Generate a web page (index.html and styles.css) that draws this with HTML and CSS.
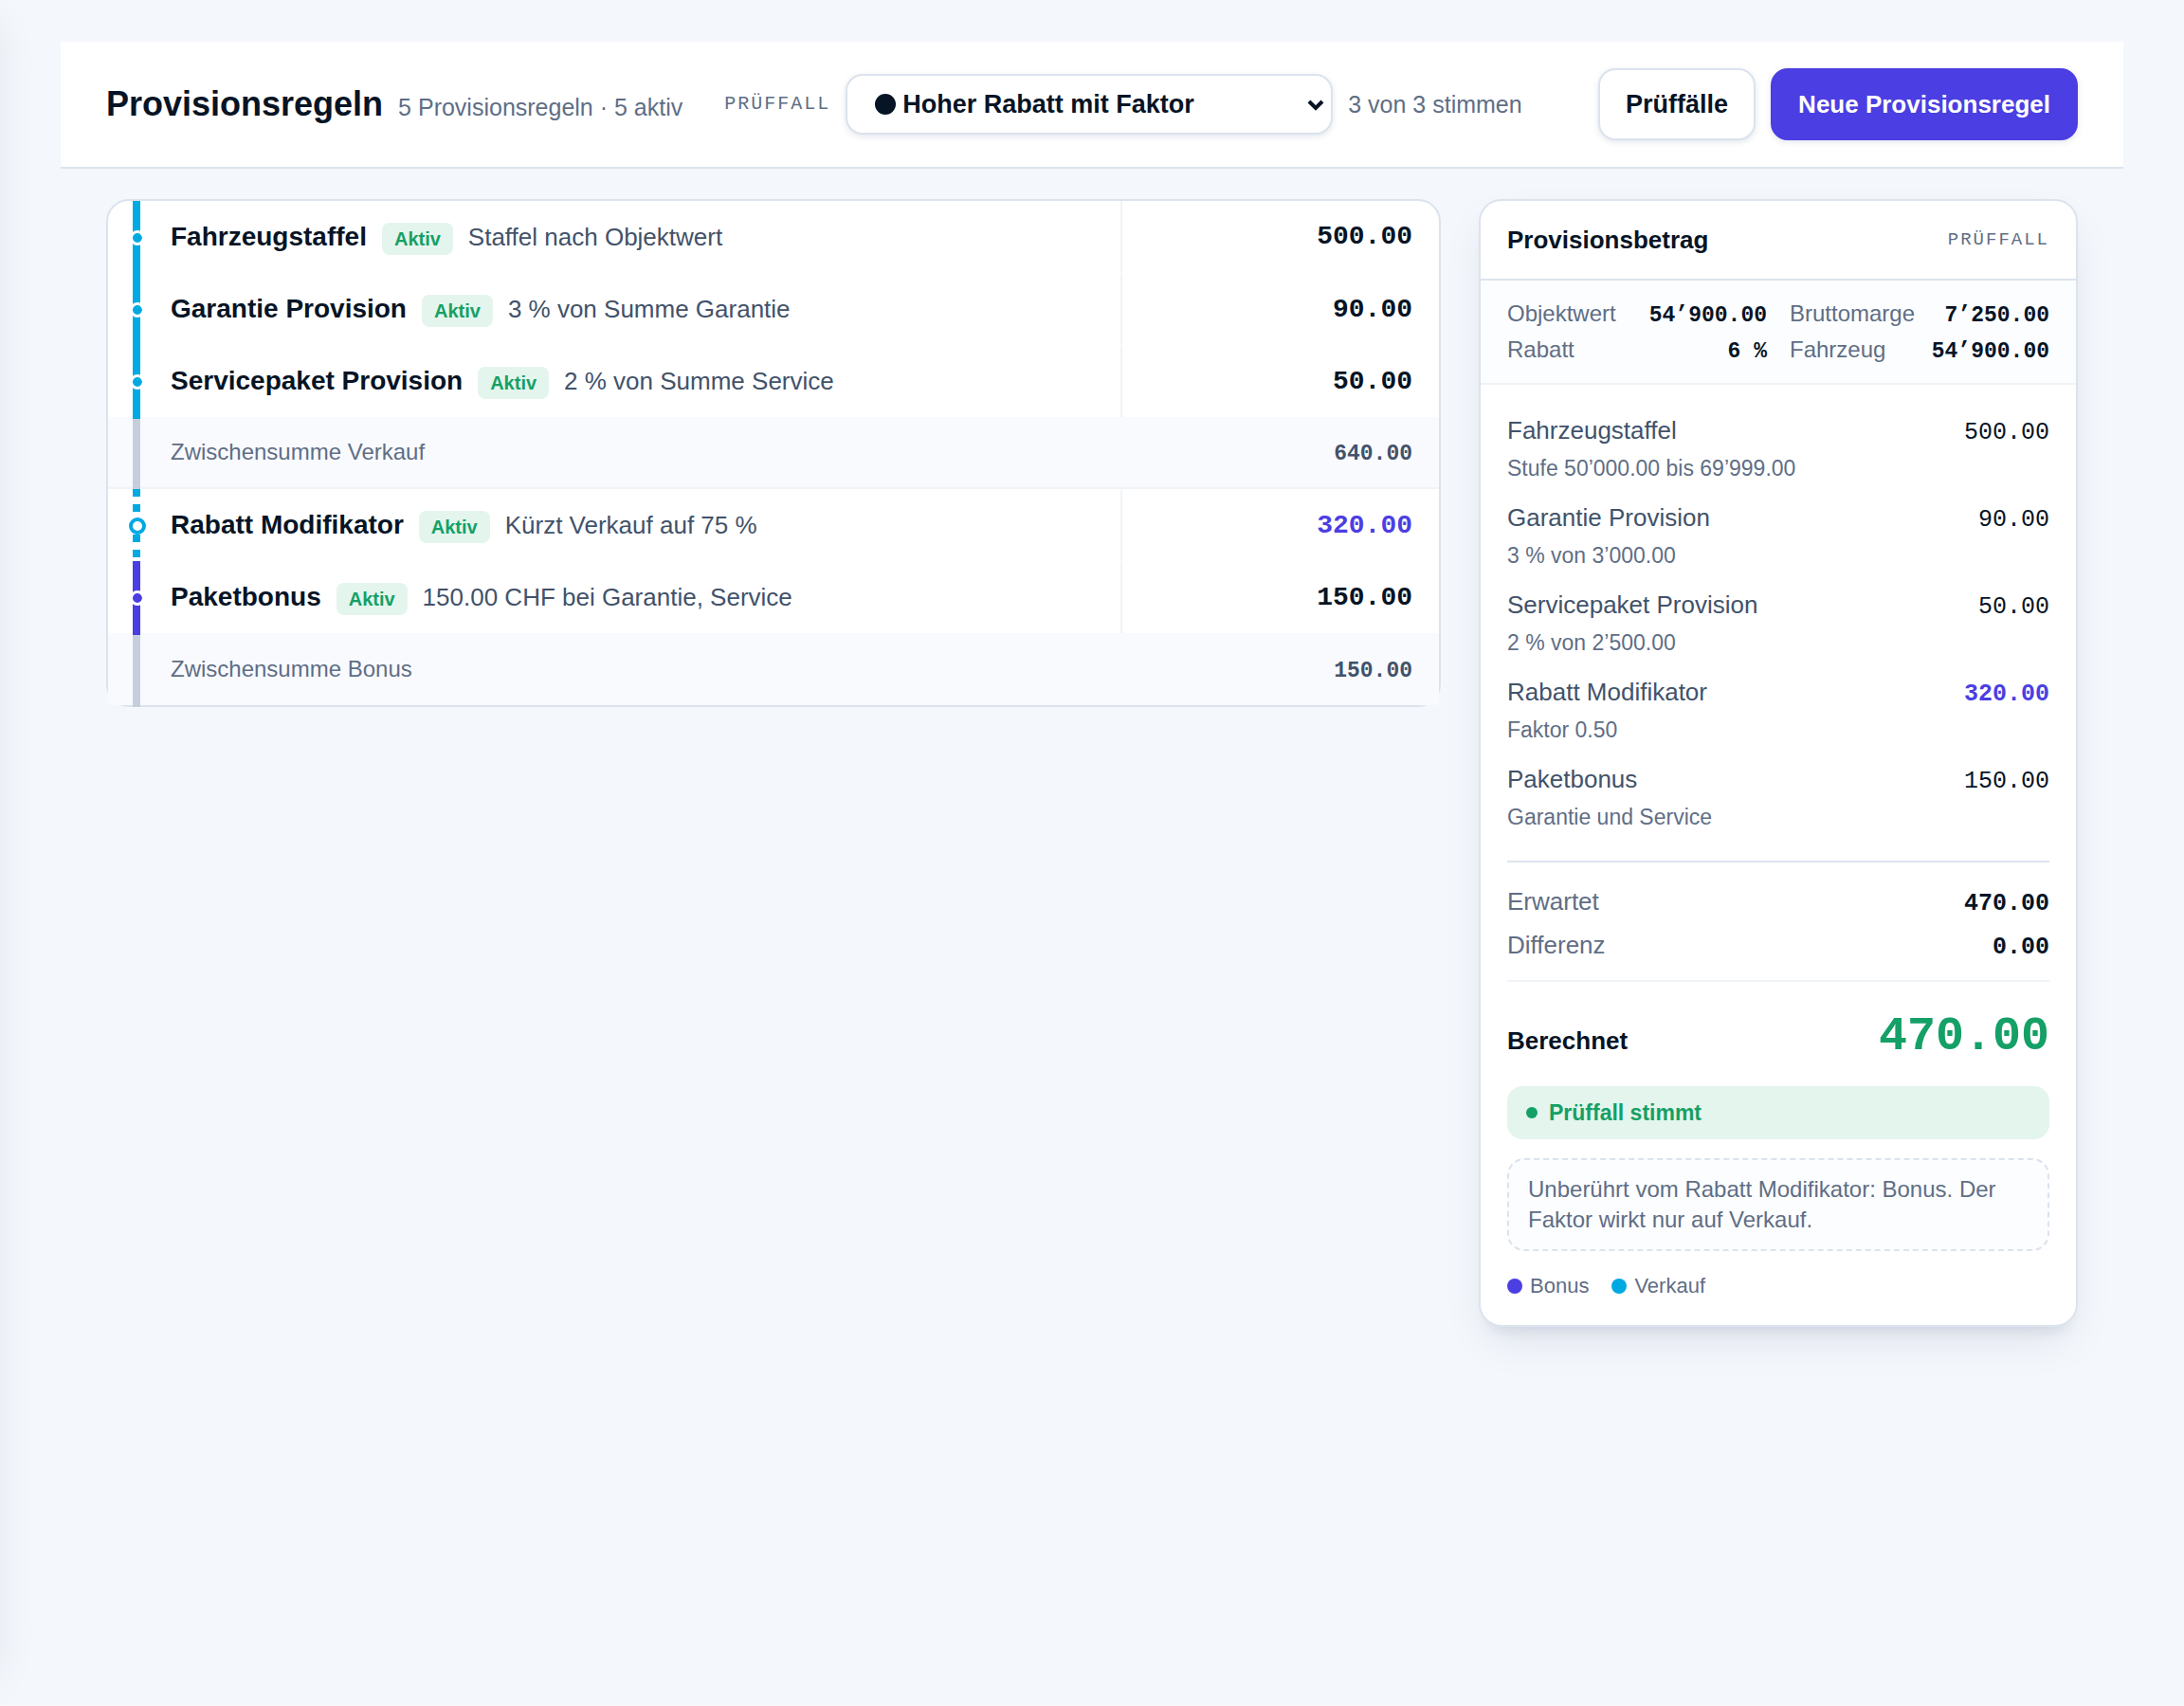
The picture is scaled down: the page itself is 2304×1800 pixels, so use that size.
FILE: index.html
```html
<!DOCTYPE html>
<html lang="de-CH">
<head>
<meta charset="utf-8">
<meta name="viewport" content="width=device-width, initial-scale=1">
<title>Provisionsregeln</title>
<link rel="stylesheet" href="styles.css">
</head>
<body>
<div class="drawer-edge"></div>
<header class="topbar">
  <div class="heading">
    <h1>Provisionsregeln</h1>
    <p class="summary">5 Provisionsregeln · 5 aktiv</p>
  </div>
  <div class="case-picker">
    <label class="overline" for="case">PRÜFFALL</label>
    <div class="select">
      <select id="case">
        <option>Hoher Rabatt mit Faktor</option>
      </select>
      <svg class="chevron" viewBox="0 0 18 12" aria-hidden="true"><path d="M2 2l7 7 7-7" fill="none" stroke="currentColor" stroke-width="4"/></svg>
    </div>
    <span class="summary">3 von 3 stimmen</span>
  </div>
  <div class="actions">
    <button class="btn" type="button">Prüffälle</button>
    <button class="btn btn-primary" type="button">Neue Provisionsregel</button>
  </div>
</header>
<main class="content">
  <section class="rules">
    <table>
      <tbody>
        <tr class="rule sales">
          <td class="track"><span class="line"></span><span class="stop"></span></td>
          <td><div class="info"><strong>Fahrzeugstaffel</strong><span class="tag">Aktiv</span><span>Staffel nach Objektwert</span></div></td>
          <td class="amount">500.00</td>
        </tr>
        <tr class="rule sales">
          <td class="track"><span class="line"></span><span class="stop"></span></td>
          <td><div class="info"><strong>Garantie Provision</strong><span class="tag">Aktiv</span><span>3 % von Summe Garantie</span></div></td>
          <td class="amount">90.00</td>
        </tr>
        <tr class="rule sales">
          <td class="track"><span class="line"></span><span class="stop"></span></td>
          <td><div class="info"><strong>Servicepaket Provision</strong><span class="tag">Aktiv</span><span>2 % von Summe Service</span></div></td>
          <td class="amount">50.00</td>
        </tr>
        <tr class="subtotal divided">
          <td class="track"><span class="line"></span></td>
          <td>Zwischensumme Verkauf</td>
          <td class="amount">640.00</td>
        </tr>
        <tr class="rule sales modifier">
          <td class="track"><span class="line"></span><span class="stop"></span></td>
          <td><div class="info"><strong>Rabatt Modifikator</strong><span class="tag">Aktiv</span><span>Kürzt Verkauf auf 75 %</span></div></td>
          <td class="amount">320.00</td>
        </tr>
        <tr class="rule bonus">
          <td class="track"><span class="line"></span><span class="stop"></span></td>
          <td><div class="info"><strong>Paketbonus</strong><span class="tag">Aktiv</span><span>150.00 CHF bei Garantie, Service</span></div></td>
          <td class="amount">150.00</td>
        </tr>
        <tr class="subtotal">
          <td class="track"><span class="line"></span></td>
          <td>Zwischensumme Bonus</td>
          <td class="amount">150.00</td>
        </tr>
      </tbody>
    </table>
  </section>
  <aside class="result">
    <div class="result-head">
      <h2>Provisionsbetrag</h2>
      <span class="overline">PRÜFFALL</span>
    </div>
    <dl class="inputs">
      <div><dt>Objektwert</dt><dd>54’900.00</dd></div>
      <div><dt>Bruttomarge</dt><dd>7’250.00</dd></div>
      <div><dt>Rabatt</dt><dd>6 %</dd></div>
      <div><dt>Fahrzeug</dt><dd>54’900.00</dd></div>
    </dl>
    <div class="result-body">
      <ul class="steps">
        <li><span>Fahrzeugstaffel</span><span class="value">500.00</span><small>Stufe 50’000.00 bis 69’999.00</small></li>
        <li><span>Garantie Provision</span><span class="value">90.00</span><small>3 % von 3’000.00</small></li>
        <li><span>Servicepaket Provision</span><span class="value">50.00</span><small>2 % von 2’500.00</small></li>
        <li><span>Rabatt Modifikator</span><span class="value changed">320.00</span><small>Faktor 0.50</small></li>
        <li><span>Paketbonus</span><span class="value">150.00</span><small>Garantie und Service</small></li>
      </ul>
      <dl class="check">
        <div><dt>Erwartet</dt><dd>470.00</dd></div>
        <div><dt>Differenz</dt><dd>0.00</dd></div>
      </dl>
      <div class="total"><span>Berechnet</span><output>470.00</output></div>
      <p class="status">Prüffall stimmt</p>
      <p class="note">Unberührt vom Rabatt Modifikator: Bonus. Der Faktor wirkt nur auf Verkauf.</p>
      <ul class="legend">
        <li class="bonus">Bonus</li>
        <li class="sales">Verkauf</li>
      </ul>
    </div>
  </aside>
</main>
</body>
</html>
```
FILE: styles.css
```css
:root {
  --bg: #f4f7fc;
  --ink: #071425;
  --text: #42526a;
  --muted: #5f6e85;
  --border: #dce3ed;
  --hairline: #eff3f8;
  --primary: #4b3ee2;
  --sky: #00a9e2;
  --green: #14a066;
  --green-soft: #e4f5ed;
  --sans: "Liberation Sans", Arial, sans-serif;
  --mono: "Liberation Mono", "Courier New", monospace;
  --shadow-sm: 0 2px 6px rgba(20, 50, 100, .12);
  --shadow-lg: 0 14px 16px -12px rgba(30, 60, 110, .14), 0 20px 48px -10px rgba(20, 40, 70, .1);
}

* { box-sizing: border-box; }

body {
  margin: 0;
  padding: 44px 64px;
  background: var(--bg);
  color: var(--text);
  font: 26px/40px var(--sans);
}

h1, h2, p, dl, dd, ul { margin: 0; padding: 0; }
ul { list-style: none; }

/* Closed navigation drawer: only its shadow reaches into the page */
.drawer-edge {
  position: fixed;
  top: 0;
  bottom: 40px;
  left: -80px;
  width: 80px;
  border-radius: 24px;
  box-shadow: 0 16px 48px -6px rgba(20, 40, 70, .09);
}

.overline {
  color: var(--muted);
  font: 20px/40px var(--mono);
  letter-spacing: 2px;
}

/* Top bar */
.topbar {
  display: flex;
  align-items: center;
  gap: 44px;
  padding: 28px 48px;
  background: #fff;
  border-bottom: 2px solid var(--border);
}
.heading {
  display: flex;
  align-items: baseline;
  gap: 16px;
}
h1 {
  color: var(--ink);
  font-size: 36px;
  line-height: 48px;
}
.summary {
  color: var(--muted);
  font-size: 25px;
  white-space: nowrap;
}
.case-picker {
  display: flex;
  align-items: center;
  gap: 16px;
}
.select { position: relative; }
.select select {
  appearance: none;
  width: 514px;
  height: 64px;
  padding: 0 60px 0 58px;
  border: 2px solid var(--border);
  border-radius: 18px;
  background: #fff;
  box-shadow: var(--shadow-sm);
  color: var(--ink);
  font: bold 27px var(--sans);
}
.select::before {
  position: absolute;
  top: 21px;
  left: 31px;
  width: 22px;
  height: 22px;
  border-radius: 50%;
  background: var(--ink);
  content: "";
  pointer-events: none;
}
.chevron {
  position: absolute;
  top: 27px;
  right: 9px;
  width: 18px;
  height: 12px;
  color: var(--ink);
  pointer-events: none;
}
.actions {
  display: flex;
  gap: 16px;
  margin-left: auto;
}
.btn {
  height: 76px;
  padding: 0 27px;
  border: 2px solid var(--border);
  border-radius: 18px;
  background: #fff;
  box-shadow: var(--shadow-sm);
  color: var(--ink);
  font: bold 27px var(--sans);
  white-space: nowrap;
}
.btn-primary {
  border-color: var(--primary);
  background: var(--primary);
  color: #fff;
  font-size: 26px;
}

.content {
  display: grid;
  grid-template-columns: minmax(0, 1fr) 632px;
  align-items: start;
  gap: 40px;
  padding: 32px 48px;
}

/* Rules */
.rules {
  border: 2px solid var(--border);
  border-radius: 24px;
  background: #fff;
}
.rules table {
  width: 100%;
  border-spacing: 0;
}
.rules td {
  height: 76px;
  padding: 0;
}
.rules .track {
  position: relative;
  width: 66px;
}
.line {
  position: absolute;
  z-index: 1;
  top: 0;
  bottom: -2px;
  left: 26px;
  width: 8px;
  background: #c5cfdc;
}
.stop {
  position: absolute;
  z-index: 2;
  top: 31px;
  left: 23px;
  width: 16px;
  height: 16px;
  border: 3px solid #fff;
  border-radius: 50%;
  background-clip: padding-box;
}
.subtotal .line { top: 2px; }
.sales .line, .sales .stop { background-color: var(--sky); }
.bonus .line, .bonus .stop { background-color: var(--primary); }
.modifier .line {
  bottom: 0;
  background: repeating-linear-gradient(var(--sky) 0 8px, #fff 8px 16px);
}
.modifier .stop {
  top: 30px;
  left: 22px;
  width: 18px;
  height: 18px;
  border: 4px solid var(--sky);
  background: #fff;
}
.info {
  display: flex;
  align-items: baseline;
  gap: 16px;
}
.info strong {
  color: var(--ink);
  font-size: 28px;
}
.tag {
  padding: 0 13px;
  border-radius: 8px;
  background: var(--green-soft);
  color: var(--green);
  font-size: 20px;
  font-weight: bold;
  line-height: 34px;
}
.rules .amount {
  width: 336px;
  padding-right: 28px;
  color: var(--ink);
  font: bold 28px/40px var(--mono);
  text-align: right;
}
.rule .amount {
  border-top: 2px solid #fff;
  border-left: 2px solid var(--hairline);
}
.rule:first-child .amount {
  border-top: 0;
  border-top-right-radius: 22px;
}
.rules .modifier .amount { color: var(--primary); }
.subtotal td {
  background: #f9fafe;
  color: var(--muted);
  font-size: 24px;
}
.rules .subtotal .amount {
  padding-top: 4px;
  color: var(--text);
  font-size: 23px;
}
.divided td { border-bottom: 2px solid var(--hairline); }

/* Result */
.result {
  border: 2px solid var(--border);
  border-radius: 24px;
  background: #fff;
  box-shadow: var(--shadow-lg);
}
.result-head {
  display: flex;
  align-items: center;
  justify-content: space-between;
  height: 84px;
  padding: 0 28px;
  border-bottom: 2px solid var(--border);
}
.result-head .overline { font-size: 19px; }
h2 {
  color: var(--ink);
  font-size: 26px;
}
.inputs {
  display: grid;
  grid-template-columns: 1fr 1fr;
  column-gap: 24px;
  padding: 16px 28px;
  border-bottom: 2px solid var(--hairline);
  background: #fcfdff;
  font-size: 24px;
  line-height: 38px;
}
.inputs div, .check div {
  display: flex;
  align-items: baseline;
  justify-content: space-between;
  height: 38px;
}
.check div { height: 46px; }
dt { color: var(--muted); }
dd {
  color: var(--ink);
  font-family: var(--mono);
  font-weight: bold;
}
.inputs dd { font-size: 23px; }
.result-body { padding: 28px 28px 24px; }
.steps {
  display: grid;
  gap: 12px;
  padding-bottom: 26px;
  border-bottom: 2px solid var(--border);
}
.steps li {
  display: grid;
  grid-template: 40px 40px / 1fr auto;
  align-items: baseline;
}
.steps small {
  grid-column: 1 / -1;
  color: var(--muted);
  font-size: 23px;
}
.value {
  color: var(--ink);
  font-family: var(--mono);
  font-size: 25px;
}
.changed {
  color: var(--primary);
  font-weight: bold;
}
.check {
  padding: 18px 0 14px;
  border-bottom: 2px solid var(--hairline);
  line-height: 46px;
}
.check dd { font-size: 25px; }
.total {
  display: flex;
  align-items: baseline;
  justify-content: space-between;
  padding: 28px 0 22px;
  color: var(--ink);
  font-weight: bold;
}
.total output {
  color: var(--green);
  font: bold 50px/60px var(--mono);
}
.status {
  display: flex;
  align-items: center;
  gap: 12px;
  height: 56px;
  padding: 0 20px;
  border-radius: 16px;
  background: var(--green-soft);
  color: var(--green);
  font-size: 23px;
  font-weight: bold;
}
.status::before {
  width: 12px;
  height: 12px;
  border-radius: 50%;
  background: currentColor;
  content: "";
}
.note {
  margin: 20px 0;
  padding: 15px 20px;
  border: 2px dashed var(--border);
  border-radius: 18px;
  background: #fcfdff;
  color: var(--muted);
  font-size: 24px;
  line-height: 32px;
}
.legend {
  display: flex;
  gap: 24px;
  color: var(--muted);
  font-size: 22px;
  line-height: 34px;
}
.legend li {
  display: flex;
  align-items: center;
  gap: 8px;
}
.legend li::before {
  width: 16px;
  height: 16px;
  border-radius: 50%;
  content: "";
}
.legend .bonus::before { background: var(--primary); }
.legend .sales::before { background: var(--sky); }
```
